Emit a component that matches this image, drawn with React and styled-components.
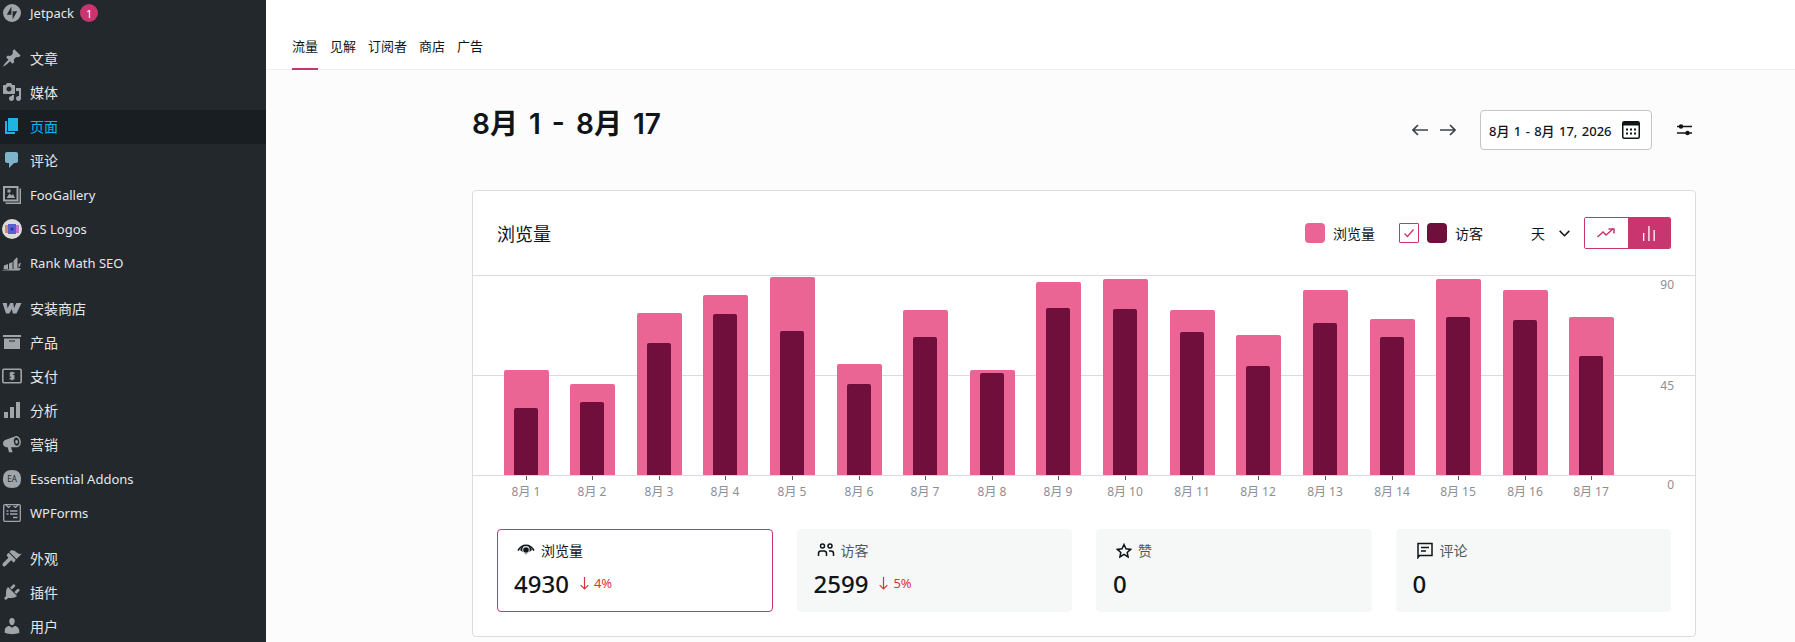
import React from 'react'
import styled, { createGlobalStyle } from 'styled-components'

const sans = '"Noto Sans", "Noto Sans CJK SC", sans-serif'

const GlobalStyle = createGlobalStyle`
  html, body {
    margin: 0;
    padding: 0;
    height: 642px;
    overflow: hidden;
    background: #fcfcfc;
    font-family: ${sans};
  }
  * { box-sizing: border-box; }
`

const Page = styled.div`
  display: flex;
  width: 1795px;
  height: 642px;
  overflow: hidden;
`

const Sidebar = styled.nav`
  flex: 0 0 266px;
  display: flex;
  flex-direction: column;
  height: 642px;
  overflow: hidden;
  background: #23282d;
`

const MenuGroup = styled.div`
  display: flex;
  flex-direction: column;
  flex-shrink: 0;
  margin-bottom: 12px;
`

const TopMenuGroup = styled(MenuGroup)`
  margin-bottom: 16px;
`

const MenuItem = styled.div`
  display: flex;
  align-items: center;
  flex-shrink: 0;
  height: ${({ $short }) => ($short ? 26 : 34)}px;
  padding-left: 2px;
  padding-bottom: ${({ $latin }) => ($latin ? 0 : 2)}px;
  font-size: ${({ $latin }) => ($latin ? 13 : 14)}px;
  color: ${({ $active }) => ($active ? '#00b9eb' : '#e6e7e8')};
  background: ${({ $active }) => ($active ? '#191e23' : 'transparent')};
`

const MenuIcon = styled.span`
  display: flex;
  flex: 0 0 20px;
  margin-right: 8px;
  color: ${({ $tint }) => $tint || '#a0a5aa'};

  svg {
    display: block;
    width: 20px;
    height: 20px;
  }
`

const Badge = styled.span`
  display: flex;
  align-items: center;
  justify-content: center;
  width: 18px;
  height: 18px;
  margin-left: 6px;
  border-radius: 50%;
  background: #c9356e;
  color: #fff;
  font-size: 11px;
`

const Main = styled.main`
  flex: 1;
  display: flex;
  flex-direction: column;
  min-width: 0;
`

const TabBar = styled.div`
  display: flex;
  align-items: flex-end;
  gap: 12px;
  flex-shrink: 0;
  height: 70px;
  padding-left: 26px;
  background: #fff;
  border-bottom: 1px solid #f0f0f1;
`

const Tab = styled.div`
  height: 39px;
  margin-bottom: -1px;
  padding-top: 5px;
  font-size: 13px;
  line-height: 20px;
  color: #101517;
  border-bottom: 2px solid ${({ $active }) => ($active ? '#c9356e' : 'transparent')};
`

const Content = styled.div`
  width: 1224px;
  margin-left: 206px;
  padding-top: 39px;
`

const HeadRow = styled.div`
  display: flex;
  align-items: flex-start;
  height: 41px;
  margin-bottom: 40px;
`

const PageTitle = styled.h1`
  flex: 1;
  margin: 0;
  font-family: Inter, "Noto Sans CJK SC", sans-serif;
  font-size: 28px;
  font-weight: 600;
  line-height: 30px;
  word-spacing: 4px;
  color: #101517;
`

const HeadControls = styled.div`
  display: flex;
  align-items: center;
  height: 40px;
  margin-top: 1px;
  padding-right: 4px;
`

const ArrowButton = styled.span`
  display: flex;
  width: 16px;
  margin-top: -1px;
  margin-right: ${({ $gap }) => $gap}px;
  color: #3c434a;

  svg {
    display: block;
    width: 16px;
    height: 12px;
  }
`

const DateButton = styled.div`
  display: flex;
  align-items: center;
  justify-content: space-between;
  width: 172px;
  height: 40px;
  margin-right: 25px;
  padding: 0 11px 0 8px;
  background: #fff;
  border: 1px solid #c3c4c7;
  border-radius: 4px;
  font-size: 13px;
  font-weight: 500;
  word-spacing: 1px;
  color: #101517;
  white-space: nowrap;
`

const IconSlot = styled.span`
  display: flex;
  color: #101517;

  svg {
    display: block;
  }
`

const Card = styled.section`
  background: #fff;
  border: 1px solid #dcdcde;
  border-radius: 4px;
`

const CardHead = styled.div`
  display: flex;
  align-items: center;
  height: 84px;
  padding: 0 24px;
`

const CardTitle = styled.h2`
  flex: 1;
  margin: 0;
  font-size: 18px;
  font-weight: 400;
  color: #101517;
`

const Legend = styled.div`
  display: flex;
  align-items: center;
  font-size: 14px;
  color: #101517;
`

const Swatch = styled.span`
  width: 20px;
  height: 20px;
  margin-right: 8px;
  border-radius: 4px;
  background: ${({ $color }) => $color};
`

const LegendLabel = styled.span`
  margin-right: ${({ $gap }) => $gap}px;
`

const CheckBox = styled.span`
  display: flex;
  align-items: center;
  justify-content: center;
  width: 20px;
  height: 20px;
  margin-right: 8px;
  border: 1px solid #c9356e;
  border-radius: 1px;
  color: #c9356e;
`

const IntervalChevron = styled.span`
  display: flex;
  margin: 0 14px;
  color: #101517;
`

const Toggle = styled.div`
  display: flex;
  width: 87px;
  height: 32px;
  border: 1px solid #c9356e;
  border-radius: 2px;
  overflow: hidden;
`

const ToggleButton = styled.span`
  flex: 1;
  display: flex;
  align-items: center;
  justify-content: center;
  background: ${({ $on }) => ($on ? '#c9356e' : '#fff')};
  color: ${({ $on }) => ($on ? '#fff' : '#c9356e')};
`

const ChartSvg = styled.svg`
  display: block;
  width: 1222px;
  height: 230px;

  text {
    font-family: ${sans};
    font-size: 12px;
    fill: #8c8f94;
  }
`

const StatGrid = styled.div`
  display: grid;
  grid-template-columns: repeat(4, 1fr);
  gap: 24px;
  padding: 24px;
`

const StatCard = styled.div`
  display: flex;
  flex-direction: column;
  height: 83px;
  padding: 10px 16px 0;
  border-radius: 4px;
  border: 1px solid ${({ $active }) => ($active ? '#c9356e' : '#f6f7f7')};
  background: ${({ $active }) => ($active ? '#fff' : '#f6f7f7')};
`

const StatLabel = styled.div`
  display: flex;
  align-items: center;
  height: 20px;
  padding-left: 3px;
  font-size: 14px;
  color: ${({ $active }) => ($active ? '#101517' : '#50575e')};

  svg {
    display: block;
    margin-right: 6px;
    color: #101517;
  }
`

const StatValue = styled.div`
  display: flex;
  align-items: center;
  height: 32px;
  margin-top: 7px;
  font-size: 24px;
  font-weight: 500;
  color: #101517;
`

const Delta = styled.span`
  display: flex;
  align-items: center;
  margin-left: 11px;
  font-size: 13px;
  font-weight: 400;
  color: #d63638;

  svg {
    display: block;
    margin-right: 5px;
  }
`

const fill = { fill: 'currentColor' }

const icons = {
  jetpack: (
    <svg viewBox="0 0 20 20"><path {...fill} fillRule="evenodd" d="M10 1a9 9 0 1 0 0 18 9 9 0 0 0 0-18zM9.400 3.600v8.200H4.800zM10.600 16.400V8.200h4.600z" /></svg>
  ),
  post: (
    <svg viewBox="0 0 20 20"><path {...fill} d="M10.440 3.020l1.820-1.820 6.360 6.350-1.830 1.820c-1.050-.68-2.480-.57-3.410.36l-.75.75c-.92.93-1.040 2.350-.35 3.410l-1.830 1.820-2.410-2.410-2.800 2.790c-.42.42-3.380 2.710-3.800 2.290s1.860-3.390 2.280-3.810l2.790-2.790L4.100 9.360l1.830-1.820c1.050.69 2.480.57 3.400-.36l.75-.75c.93-.92 1.050-2.350.36-3.410z" /></svg>
  ),
  media: (
    <svg viewBox="0 0 20 20"><path {...fill} d="M13 11V4c0-.55-.45-1-1-1h-1.670L9 1H5L3.670 3H2c-.55 0-1 .45-1 1v7c0 .55.45 1 1 1h10c.55 0 1-.45 1-1zM7 4.500c1.380 0 2.500 1.120 2.500 2.500S8.380 9.500 7 9.500 4.500 8.380 4.500 7 5.620 4.500 7 4.500zM14 6h5v10.500c0 1.380-1.120 2.500-2.500 2.500S14 17.880 14 16.500s1.120-2.500 2.500-2.500c.17 0 .34.02.5.05V9h-3V6zm-4 8.050V13h2v3.500c0 1.380-1.120 2.500-2.500 2.500S7 17.880 7 16.500 8.120 14 9.500 14c.17 0 .34.02.5.05z" /></svg>
  ),
  page: (
    <svg viewBox="0 0 20 20"><path {...fill} d="M6 15V2h10v13H6zm-1 1h8v2H3V5h2v11z" /></svg>
  ),
  comment: (
    <svg viewBox="0 0 20 20"><path {...fill} d="M5 2h9c1.100 0 2 .9 2 2v7c0 1.100-.9 2-2 2h-2l-5 5v-5H5c-1.100 0-2-.9-2-2V4c0-1.100.9-2 2-2z" /></svg>
  ),
  gallery: (
    <svg viewBox="0 0 20 20">
      <path {...fill} fillRule="evenodd" d="M1 1h15.500v15.500H1zM3 3v11.500h11.500V3z" />
      <path {...fill} d="M4.500 13l3-4.500 2 2 1.500-1.500 2 4zM5.500 4.500h3v3h-3zM17.500 3.500H19V19H3.500v-1.500h14z" />
    </svg>
  ),
  gs: (
    <svg viewBox="0 0 20 20">
      <circle cx="10" cy="10" r="10" fill="#dcdcdc" />
      <rect x="3" y="6" width="5" height="8" fill="#e0806f" />
      <rect x="12" y="6" width="5" height="8" fill="#c873d8" />
      <rect x="6" y="5" width="8" height="10" fill="#5a5fd0" />
      <circle cx="10" cy="10" r="1.600" fill="#2d32a8" />
    </svg>
  ),
  rank: (
    <svg viewBox="0 0 20 20"><path {...fill} d="M2 12.500l4-1.500v5H1.500zM7 10.500l3.500-1.500v7H7zM11.500 8l3-3.500 1 .5v10.500h-4zM16.500 11l2.500-1.500-1 3.500-1.500 2zM0 17l19-2-1.500 2.500H1z" /></svg>
  ),
  woo: (
    <svg viewBox="0 0 20 20"><path {...fill} d="M.5 5h4.300l.7 5.300L8.300 5h3l.7 5.300L14.300 5H19.500l-5 10.500h-3.700l-.9-4.600-2.600 4.600H4z" /></svg>
  ),
  archive: (
    <svg viewBox="0 0 20 20"><path {...fill} fillRule="evenodd" d="M1 3h18v2H1zM2 6.500h16V17H2zM7 8.500v1h6v-1z" /></svg>
  ),
  pay: (
    <svg viewBox="0 0 20 20">
      <rect x=".8" y="3.200" width="18.400" height="13.600" rx="1" fill="none" stroke="currentColor" strokeWidth="1.600" />
      <path fill="none" stroke="currentColor" strokeWidth="1.700" d="M12.500 7.200H8.600v2.700h3v2.800H7.600M10 5.800v8.400" />
    </svg>
  ),
  chart: (
    <svg viewBox="0 0 20 20"><path {...fill} d="M18 18V2h-4v16h4zm-6 0V7H8v11h4zm-6 0v-6H2v6h4z" /></svg>
  ),
  megaphone: (
    <svg viewBox="0 0 20 20"><path {...fill} fillRule="evenodd" d="M14 2c2.400-.2 4.600 2.400 4.800 5.500.2 3-1.200 5.500-3.500 5.700H9l1.600 5H7l-1.300-5H4.400C2.600 13 1 11.500 1 9.500c0-1.700 1-3 2.200-3.400zM13.800 3.500c-1.500.4-2.300 2.300-2 4.500.4 2.300 1.800 4 3.400 3.800 1.600-.3 2.500-2.200 2.100-4.500-.3-2.300-1.900-4-3.500-3.800zM14.300 6c.9-.2 1.500.6 1.600 1.600.2 1-.2 1.900-1 2-.9.2-1.500-.6-1.600-1.600-.2-1 .2-1.900 1-2z" /></svg>
  ),
  ea: (
    <svg viewBox="0 0 20 20">
      <path {...fill} d="M10 1c6 0 9 3 9 9s-3 9-9 9-9-3-9-9 3-9 9-9z" />
      <text x="10" y="13" textAnchor="middle" fontSize="8" fill="#23282d" fontFamily={sans}>EA</text>
    </svg>
  ),
  forms: (
    <svg viewBox="0 0 20 20">
      <rect x="1.700" y="1.700" width="16.600" height="16.600" rx="1" fill="none" stroke="currentColor" strokeWidth="1.300" />
      <path fill="none" stroke="currentColor" strokeWidth="1.300" d="M4 2l2.500 2.500L8.500 3M11.500 3l2 1.500L16 2M4.500 8h2M8 8h7.500M4.500 11h2M8 11h7.500M11 14.500h4.500" />
    </svg>
  ),
  brush: (
    <svg viewBox="0 0 20 20"><path {...fill} d="M14.480 11.060L7.410 3.990l1.500-1.500c.5-.56 2.300-.47 3.510.32 1.210.8 1.430 1.280 2.910 2.100 1.180.64 2.450 1.260 4.450.85zm-.71.71L6.700 4.700 4.930 6.470c-.39.39-.39 1.020 0 1.410l1.060 1.060c.39.39.39 1.030 0 1.420-.6.6-5.050 5.060-5.050 5.060-.7.700-.6 1.900 0 2.500s1.800.7 2.500 0l5.060-5.050c.39-.39 1.020-.39 1.410 0l1.060 1.060c.39.39 1.020.39 1.410 0z" /></svg>
  ),
  plugin: (
    <svg viewBox="0 0 20 20"><path {...fill} d="M13.110 4.360L9.870 7.600 8 5.730l3.240-3.240c.35-.34 1.050-.2 1.560.32.520.51.660 1.210.310 1.550zm-8 1.770l.91-1.120 9.010 9.010-1.190.84c-.71.71-2.630 1.160-3.820 1.160H6.140L4.900 17.260c-.59.59-1.540.59-2.120 0-.59-.58-.59-1.530 0-2.120l1.240-1.240v-3.880c0-1.130.4-3.190 1.090-3.890zm7.260 3.970l3.240-3.240c.34-.35 1.040-.21 1.550.31.520.51.660 1.210.310 1.550l-3.240 3.250z" /></svg>
  ),
  user: (
    <svg viewBox="0 0 20 20"><path {...fill} d="M10 9.250c-2.270 0-2.730-3.440-2.730-3.440C7 4.020 7.820 2 9.970 2c2.160 0 2.980 2.020 2.710 3.810 0 0-.41 3.440-2.680 3.440zm0 2.570L12.720 10c2.390 0 4.520 2.330 4.520 4.530v2.490s-3.650 1.130-7.240 1.130c-3.650 0-7.240-1.130-7.240-1.130v-2.490c0-2.250 1.940-4.480 4.470-4.480z" /></svg>
  ),
}

const menuGroups = [
  [
    { label: '文章', icon: 'post' },
    { label: '媒体', icon: 'media' },
    { label: '页面', icon: 'page', active: true, tint: '#1fb5e0' },
    { label: '评论', icon: 'comment', tint: '#7fb3c9' },
    { label: 'FooGallery', icon: 'gallery', latin: true },
    { label: 'GS Logos', icon: 'gs', latin: true },
    { label: 'Rank Math SEO', icon: 'rank', latin: true },
  ],
  [
    { label: '安装商店', icon: 'woo' },
    { label: '产品', icon: 'archive' },
    { label: '支付', icon: 'pay' },
    { label: '分析', icon: 'chart' },
    { label: '营销', icon: 'megaphone' },
    { label: 'Essential Addons', icon: 'ea', latin: true },
    { label: 'WPForms', icon: 'forms', latin: true },
  ],
  [
    { label: '外观', icon: 'brush' },
    { label: '插件', icon: 'plugin' },
    { label: '用户', icon: 'user' },
  ],
]

const tabs = ['流量', '见解', '订阅者', '商店', '广告']

// left edge and top edge of every bar in page pixels, baseline sits at 475
const barLefts = [504, 570, 637, 703, 770, 837, 903, 970, 1036, 1103, 1170, 1236, 1303, 1370, 1436, 1503, 1569]
const viewTops = [370, 384, 313, 295, 277, 364, 310, 370, 282, 279, 310, 335, 290, 319, 279, 290, 317]
const visitorTops = [408, 402, 343, 314, 331, 384, 337, 373, 308, 309, 332, 366, 323, 337, 317, 320, 356]

const BASE = 200
const barPath = (x, top, w) => {
  const y = top - 275
  return `M${x} ${BASE}V${y + 2}a2 2 0 0 1 2-2H${x + w - 2}a2 2 0 0 1 2 2V${BASE}z`
}

const Chart = () => (
  <ChartSvg viewBox="0 0 1222 230">
    {[0.5, 100.5, 200.5].map((y) => (
      <line key={y} x1="0" x2="1222" y1={y} y2={y} stroke="#dcdcde" />
    ))}
    {viewTops.map((top, i) => {
      const x = barLefts[i] - 473
      const cx = x + 22
      return (
        <g key={i}>
          <path d={barPath(x, top, 45)} fill="#eb6594" />
          <path d={barPath(x + 10, visitorTops[i], 24)} fill="#700f3b" />
          <line x1={cx + 0.5} x2={cx + 0.5} y1="201" y2="205" stroke="#50575e" />
          <text x={cx} y="221" textAnchor="middle">{`8月 ${i + 1}`}</text>
        </g>
      )
    })}
    <text x="1201" y="14" textAnchor="end">90</text>
    <text x="1201" y="115" textAnchor="end">45</text>
    <text x="1201" y="214" textAnchor="end">0</text>
  </ChartSvg>
)

const stats = [
  {
    label: '浏览量',
    value: '4930',
    delta: '4%',
    active: true,
    icon: (
      <svg width="18" height="12" viewBox="0 0 18 12">
        <path fill="none" stroke="currentColor" strokeWidth="1.600" d="M1 6.500C3 3 5.800 1.300 9 1.300s6 1.700 8 5.200" />
        <path fill="currentColor" d="M5 2.500h8L15 6 9 10.500 3 6z" />
        <circle cx="9" cy="6" r="3.700" fill="#fff" />
        <circle cx="9" cy="6" r="2.800" fill="currentColor" />
      </svg>
    ),
  },
  {
    label: '访客',
    value: '2599',
    delta: '5%',
    icon: (
      <svg width="18" height="14" viewBox="0 0 18 14" fill="none" stroke="currentColor" strokeWidth="1.500">
        <circle cx="5.500" cy="3" r="2" />
        <circle cx="13" cy="3" r="2" />
        <path d="M1.500 13v-2.500a2.500 2.500 0 0 1 2.500-2.500h3a2.500 2.500 0 0 1 2.500 2.500V13M12 8h2a2.500 2.500 0 0 1 2.500 2.500V13" />
      </svg>
    ),
  },
  {
    label: '赞',
    value: '0',
    icon: (
      <svg width="16" height="15" viewBox="0 0 16 15" fill="none" stroke="currentColor" strokeWidth="1.500">
        <path d="M8 1.500l2 4.300 4.600.6-3.400 3.100.9 4.500L8 11.300l-4.100 2.700.9-4.500L1.400 6.400 6 5.800z" />
      </svg>
    ),
  },
  {
    label: '评论',
    value: '0',
    icon: (
      <svg width="18" height="18" viewBox="0 0 18 18" fill="none" stroke="currentColor" strokeWidth="1.500">
        <path d="M2 16.500V2.500h14v12H3.500zM5 6.500h8M5 10h5" />
      </svg>
    ),
  },
]

const App = () => (
  <Page>
    <GlobalStyle />
    <Sidebar>
      <TopMenuGroup>
        <MenuItem $short $latin>
          <MenuIcon>{icons.jetpack}</MenuIcon>
          Jetpack
          <Badge>1</Badge>
        </MenuItem>
      </TopMenuGroup>
      {menuGroups.map((group) => (
        <MenuGroup key={group[0].label}>
          {group.map((item) => (
            <MenuItem key={item.label} $active={item.active} $latin={item.latin}>
              <MenuIcon $tint={item.tint}>{icons[item.icon]}</MenuIcon>
              {item.label}
            </MenuItem>
          ))}
        </MenuGroup>
      ))}
    </Sidebar>
    <Main>
      <TabBar>
        {tabs.map((tab, i) => (
          <Tab key={tab} $active={i === 0}>{tab}</Tab>
        ))}
      </TabBar>
      <Content>
        <HeadRow>
          <PageTitle>8月 1 - 8月 17</PageTitle>
          <HeadControls>
            <ArrowButton $gap={12}>
              <svg viewBox="0 0 16 12" fill="none" stroke="currentColor" strokeWidth="1.700"><path d="M16 6H1M6 1L1 6l5 5" /></svg>
            </ArrowButton>
            <ArrowButton $gap={24}>
              <svg viewBox="0 0 16 12" fill="none" stroke="currentColor" strokeWidth="1.700"><path d="M0 6h15M10 1l5 5-5 5" /></svg>
            </ArrowButton>
            <DateButton>
              8月 1 - 8月 17, 2026
              <IconSlot>
                <svg width="18" height="18" viewBox="0 0 18 18">
                  <rect x=".75" y=".75" width="16.500" height="16.500" rx="1.500" fill="none" stroke="currentColor" strokeWidth="1.500" />
                  <rect x="1" y="1" width="16" height="3.500" fill="currentColor" />
                  <path fill="currentColor" d="M4 7.500h2v2H4zM8 7.500h2v2H8zM12 7.500h2v2h-2zM4 11.500h2v2H4zM8 11.500h2v2H8zM12 11.500h2v2h-2z" />
                </svg>
              </IconSlot>
            </DateButton>
            <IconSlot>
              <svg width="15" height="12" viewBox="0 0 15 12">
                <path stroke="currentColor" strokeWidth="1.300" d="M0 2.500h15M0 9h15" />
                <circle cx="4" cy="2.500" r="2.200" fill="currentColor" />
                <circle cx="10.500" cy="9" r="2.200" fill="currentColor" />
              </svg>
            </IconSlot>
          </HeadControls>
        </HeadRow>
        <Card>
          <CardHead>
            <CardTitle>浏览量</CardTitle>
            <Legend>
              <Swatch $color="#eb6594" />
              <LegendLabel $gap={24}>浏览量</LegendLabel>
              <CheckBox>
                <svg width="14" height="12" viewBox="0 0 14 12" fill="none" stroke="currentColor" strokeWidth="1.300"><path d="M2.500 6.500l3 3 6-7" /></svg>
              </CheckBox>
              <Swatch $color="#700f3b" />
              <LegendLabel $gap={48}>访客</LegendLabel>
              <span>天</span>
              <IntervalChevron>
                <svg width="11" height="7" viewBox="0 0 11 7" fill="none" stroke="currentColor" strokeWidth="1.500"><path d="M.7.900l4.800 4.800L10.300.900" /></svg>
              </IntervalChevron>
              <Toggle>
                <ToggleButton>
                  <svg width="18" height="10" viewBox="0 0 18 10" fill="none" stroke="currentColor" strokeWidth="1.500"><path d="M.5 9L6 4l3 3 7-6M11.500 1H17v4.500" /></svg>
                </ToggleButton>
                <ToggleButton $on>
                  <svg width="14" height="16" viewBox="0 0 14 16" fill="currentColor"><path d="M1 8h1.300v8H1zM6.300 1h1.300v15H6.300zM11.500 5h1.300v11h-1.300z" /></svg>
                </ToggleButton>
              </Toggle>
            </Legend>
          </CardHead>
          <Chart />
          <StatGrid>
            {stats.map((stat) => (
              <StatCard key={stat.label} $active={stat.active}>
                <StatLabel $active={stat.active}>
                  {stat.icon}
                  {stat.label}
                </StatLabel>
                <StatValue>
                  {stat.value}
                  {stat.delta && (
                    <Delta>
                      <svg width="9" height="13" viewBox="0 0 9 13" fill="none" stroke="currentColor" strokeWidth="1.200"><path d="M4.500 0v12M.7 8.200l3.800 3.800 3.800-3.800" /></svg>
                      {stat.delta}
                    </Delta>
                  )}
                </StatValue>
              </StatCard>
            ))}
          </StatGrid>
        </Card>
      </Content>
    </Main>
  </Page>
)

export default App
